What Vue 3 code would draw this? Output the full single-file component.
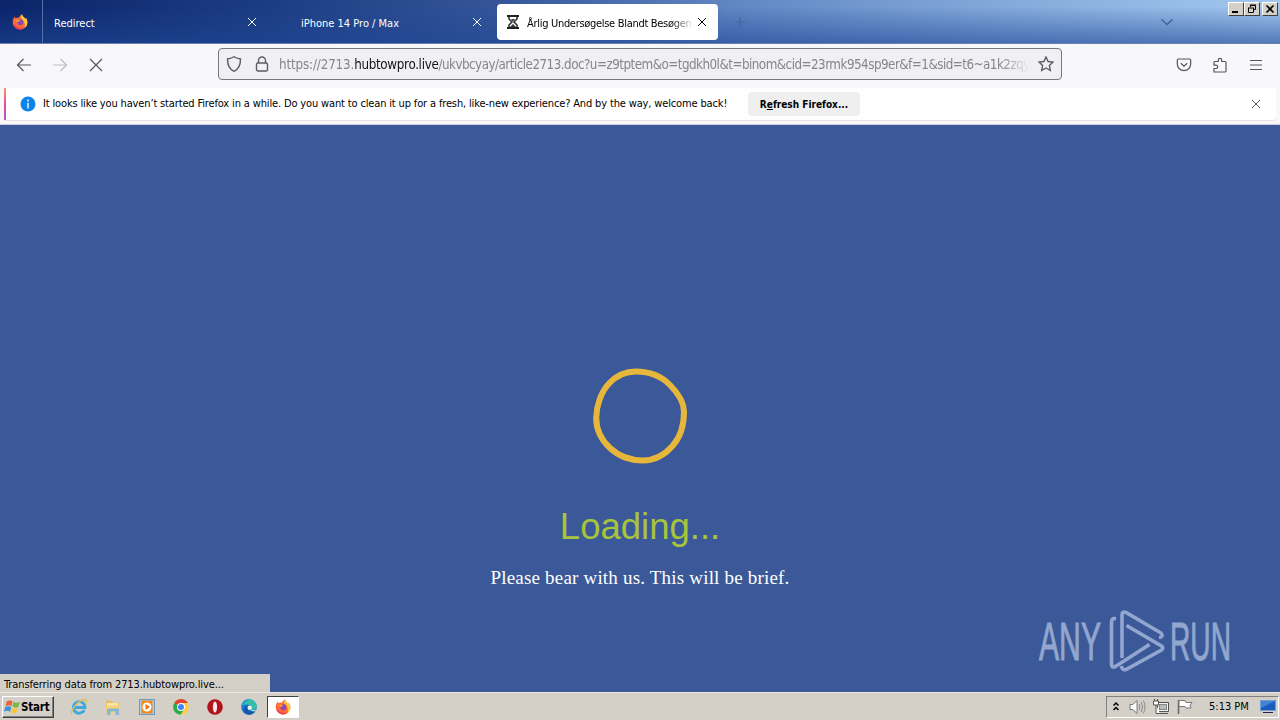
<template>
  <div class="desktop">
    <header class="tabstrip">
      <div class="fox-cell">
        <svg class="fox" viewBox="0 0 16 16"><use href="#firefox" /></svg>
      </div>
      <div v-for="tab in tabs" :key="tab.title" class="tab" :class="{ active: tab.active }">
        <svg v-if="tab.active" class="hourglass" viewBox="0 0 12 14">
          <path d="M0 1h12M0 13h12" stroke="#222" stroke-width="2" />
          <path d="M2 2v2l3 3-3 3v2M10 2v2L7 7l3 3v2" fill="none" stroke="#333" stroke-width="1.6" />
          <path d="M4 4h4L6 6.500zM3 12l3-3 3 3z" fill="#333" />
        </svg>
        <span class="tab-title">{{ tab.title }}</span>
        <svg class="close" viewBox="0 0 10 10"><path d="M1 1l8 8M9 1L1 9" /></svg>
      </div>
      <svg class="plus" viewBox="0 0 12 12"><path d="M6 1v10M1 6h10" /></svg>
      <svg class="all-tabs" viewBox="0 0 14 8"><path d="M1.500 1.500L7 6.500l5.500-5" /></svg>
      <div class="window-buttons">
        <span class="win-btn"><svg viewBox="0 0 14 12"><path d="M3 9h6" stroke-width="2" /></svg></span>
        <span class="win-btn"><svg viewBox="0 0 14 12"><path d="M5.500 4V2.500h5v4H9M5 2h6M3 5h6M3.500 5v4.500h5V5" /></svg></span>
        <span class="win-btn last"><svg viewBox="0 0 14 12"><path d="M3.500 2.500l7 7M10.500 2.500l-7 7" stroke-width="1.700" /></svg></span>
      </div>
    </header>

    <nav class="toolbar">
      <svg class="nav-icon back" viewBox="0 0 16 16"><path d="M15 8H1.500M7.500 2l-6 6 6 6" /></svg>
      <svg class="nav-icon forward" viewBox="0 0 16 16"><path d="M1 8h13.500M8.500 2l6 6-6 6" /></svg>
      <svg class="nav-icon stop" viewBox="0 0 16 16"><path d="M2 2l12 12M14 2L2 14" /></svg>
      <div class="urlbar">
        <svg class="shield" viewBox="0 0 16 16"><path d="M8 .8C6.500 2 4 2.600 1.500 3c0 6 1.200 10 6.500 12.300C13.300 13 14.500 9 14.500 3 12 2.600 9.500 2 8 .8z" /></svg>
        <svg class="lock" viewBox="0 0 14 16"><rect x="1.500" y="7" width="11" height="8" rx="1.500" /><path d="M3.500 7V4.500a3.500 3.500 0 0 1 7 0V7" /></svg>
        <div class="url"><span class="scheme">https://2713.</span><b>hubtowpro.live</b>/ukvbcyay/article2713.doc?u=z9tptem&amp;o=tgdkh0l&amp;t=binom&amp;cid=23rmk954sp9er&amp;f=1&amp;sid=t6~a1k2zqy</div>
        <svg class="star" viewBox="0 0 16 16"><path d="M8 1l2.100 4.500 4.900.6-3.600 3.400.9 5L8 12l-4.300 2.500.9-5L1 6.100l4.900-.6z" /></svg>
      </div>
      <svg class="nav-icon pocket" viewBox="0 0 16 16"><path d="M2.500 2h11a1.200 1.200 0 0 1 1.200 1.200V7a6.700 6.700 0 0 1-13.400 0V3.200A1.200 1.200 0 0 1 2.500 2zM4.800 6.200L8 9.200l3.200-3" /></svg>
      <svg class="nav-icon puzzle" viewBox="0 0 16 16"><path d="M2 15V11.500h2a1.700 1.700 0 0 0 0-3.400H2V5.500a1 1 0 0 1 1-1h3.300V3a1.700 1.700 0 0 1 3.400 0v1.500H13a1 1 0 0 1 1 1V14a1 1 0 0 1-1 1z" /></svg>
      <svg class="nav-icon menu" viewBox="0 0 16 16"><path d="M2 3.500h12M2 8h12M2 12.500h12" /></svg>
    </nav>

    <div class="notice-wrap">
      <div class="notice">
        <span class="accent"></span>
        <svg class="info" viewBox="0 0 16 16"><circle cx="8" cy="8" r="7.500" fill="#0a84e8" /><path d="M8 3.500v2M8 6.800V12.500" stroke="#fff" stroke-width="1.400" /></svg>
        <span class="notice-text">It looks like you haven’t started Firefox in a while. Do you want to clean it up for a fresh, like-new experience? And by the way, welcome back!</span>
        <button class="refresh">R<u>e</u>fresh Firefox...</button>
        <svg class="notice-close" viewBox="0 0 10 10"><path d="M1 1l8 8M9 1L1 9" /></svg>
      </div>
    </div>

    <main class="page">
      <svg class="ring" viewBox="0 0 100 100">
        <path d="M46 5.600C58 5.600 71 10 80 19C89 28 94 37 94 46C94 58 90.500 71 82.500 80C74.500 89 65 94.400 53 94.400C41 94.400 28.500 90 20 82C11.500 74 6.200 64 6.200 52C6.200 40 11 26 19 17.500C27 9 35 5.600 46 5.600z" />
      </svg>
      <h1 class="loading"><span>Loading...</span></h1>
      <p class="bear"><span>Please bear with us. This will be brief.</span></p>
      <svg class="watermark" viewBox="0 0 200 70">
        <text x="4" y="55" textLength="62" lengthAdjust="spacingAndGlyphs">ANY</text>
        <text x="135" y="55" textLength="61" lengthAdjust="spacingAndGlyphs">RUN</text>
        <path d="M81 13.500h-1.500q-3 0-3 4V59q0 4 4 2.500L114.500 39.500" />
        <path d="M87 53V10q0-4 4-2.500L126 28q3 4-2 4.500" />
        <path d="M91.500 20.500l35 20.500q2.500 2 0 4L91 64.500q-4 1-4.500-3.500" />
      </svg>
      <div class="status">Transferring data from 2713.hubtowpro.live...</div>
    </main>

    <footer class="taskbar">
      <button class="start">
        <svg viewBox="0 0 18 16">
          <path d="M3 2q3-2 6 0L8 7Q5 5.500 1.500 7z" fill="#ee6338" />
          <path d="M10 2.500q3 2 7 0L15 8q-3 1.500-6-.5z" fill="#75b843" />
          <path d="M1.300 8Q5 6.500 7.700 8L6.500 13Q3 11 0 13z" fill="#3c91da" />
          <path d="M8.700 8.500q3 2 6 .5L13 14q-3 1.500-5.600-.5z" fill="#f9c636" />
        </svg>
        <span>Start</span>
      </button>
      <div class="quick">
        <span class="quick-item">
          <svg viewBox="0 0 18 18">
            <path d="M14.300 12.200A5.800 5.800 0 1 1 15 9.500H5" fill="none" stroke="#3fa9df" stroke-width="2.800" />
            <path d="M2 16.500C-.5 13 8.500 2 15 1.500c2.200.2 1.700 2.500.5 4.500" fill="none" stroke="#e0bf55" stroke-width="1.300" />
          </svg>
        </span>
        <span class="quick-item">
          <svg viewBox="0 0 18 18">
            <path d="M2 2.500h5l1.500 2H15v9H2z" fill="#dfc069" />
            <path d="M3 5h11v8H3z" fill="#f8e7a0" />
            <path d="M2 7.500h14V15H2z" fill="#f0d27a" />
            <path d="M3.500 16.500v-5.500h11v5.500H12V13H6v3.500z" fill="#83bce5" stroke="#62a2d2" stroke-width=".5" />
          </svg>
        </span>
        <span class="quick-item">
          <svg viewBox="0 0 18 18">
            <rect x="1.500" y="1.500" width="15" height="15" fill="#a9cdea" stroke="#6b9cc5" />
            <rect x="3.500" y="2.500" width="11" height="13" fill="#f48b18" />
            <circle cx="9" cy="9" r="4.500" fill="#fff" />
            <path d="M7.500 6l4.500 3-4.500 3z" fill="#e87508" />
          </svg>
        </span>
        <span class="quick-item">
          <svg viewBox="0 0 18 18">
            <circle cx="9" cy="9" r="7.800" fill="#ffce43" />
            <path d="M9 9L2.200 5.100A7.800 7.800 0 0 1 15.800 5.100H9z" fill="#e34133" />
            <path d="M2.200 5.100A7.800 7.800 0 0 0 8.500 16.800L12.400 11 9 9z" fill="#2da94f" />
            <circle cx="9" cy="9" r="4" fill="#fff" />
            <circle cx="9" cy="9" r="3" fill="#4285f4" />
          </svg>
        </span>
        <span class="quick-item">
          <svg viewBox="0 0 18 18">
            <circle cx="9" cy="9" r="7.800" fill="#b3131b" />
            <ellipse cx="9" cy="9" rx="2.100" ry="5.600" fill="#f6e8e6" />
          </svg>
        </span>
        <span class="quick-item">
          <svg viewBox="0 0 18 18">
            <circle cx="9" cy="9" r="7.800" fill="#167bd0" />
            <path d="M1.300 8A7.800 7.800 0 0 1 16.800 8.500c0 3-3 3.500-5.500 3 1.500-3-1-5-4-5S2 7 1.300 8z" fill="#35c1a8" />
            <path d="M1.300 8A7.800 7.800 0 0 1 10 1.300C6 3 4 5 1.300 8z" fill="#1f8fdb" />
            <path d="M8 8c-2 3 1 7 7 5.500-3 4-8 4-10.500 1S4.500 8 8 8z" fill="#1558a8" />
            <path d="M11.300 11.500q5 1.500 6-1L15.500 13q-4 1-5-1.500z" fill="#d4d0c8" />
            <circle cx="9.800" cy="9.800" r="2.200" fill="#e4f1ef" />
          </svg>
        </span>
        <span class="quick-item pressed">
          <svg viewBox="0 0 16 16">
            <g id="firefox">
              <path d="M8 15.500A7.300 7.300 0 0 1 .7 8.200C.7 5.500 1.800 3.800 2.800 2.500l.6 1.800L5.500 3.600 6.600 4C7.500 2.200 9 1 10 .3c.3 2 2 2.800 3.500 4.700.3-.3.200-.8.200-1.200 1.200 1.200 1.700 3 1.700 4.600A7.300 7.300 0 0 1 8 15.500z" fill="#ff6a35" />
              <path d="M10 .3c.3 2 2 2.800 3.500 4.700.3-.3.200-.8.200-1.200 1.200 1.200 1.700 3 1.700 4.600 0 2-1 4.200-2.600 5.500C13.500 9 12 6 8.500 4z" fill="#ffc63a" />
              <path d="M1.500 11A7.300 7.300 0 0 0 12 14.500C8 14.500 4.500 13 3 10.500z" fill="#f3405a" />
              <circle cx="8.300" cy="8.300" r="3" fill="#8a48b8" />
              <path d="M3.200 6.500C5 5 7 5.500 8.500 6.500 7 7 6.500 8 5.200 8.200z" fill="#ff9a35" />
            </g>
          </svg>
        </span>
      </div>
      <div class="tray">
        <svg class="chevrons" viewBox="0 0 8 12"><path d="M1.500 4.500L4 2l2.500 2.500M1.500 9L4 6.500 6.500 9" /></svg>
        <svg class="tray-icon" viewBox="0 0 18 18">
          <path d="M2 6.500h3l4-4v13l-4-4H2z" fill="#fff" stroke="#777" />
          <path d="M11 6q2 3 0 6M13.200 4q3 5 0 10M15.300 2.500q3.500 6.500 0 13" fill="none" stroke="#888" />
        </svg>
        <svg class="tray-icon screen" viewBox="0 0 18 18">
          <path d="M5.500 4.500h11v9h-11zM8 15.500h8" fill="#f2f2f2" stroke="#555" />
          <rect x="7.500" y="6.500" width="7" height="5" fill="#bbb" stroke="#888" />
          <path d="M1.500 3v4h5V3zM2.500 3V1M5.500 3V1M4 7v8.500h4" fill="#fff" stroke="#555" />
        </svg>
        <svg class="tray-icon flag" viewBox="0 0 18 18">
          <path d="M2.500 2v14" stroke="#666" stroke-width="1.500" />
          <path d="M3 2.500h6l1 2h6l-2 3 1 2.500h-5l-1-1.500H3z" fill="#fff" stroke="#777" />
        </svg>
        <span class="clock">5:13 PM</span>
        <svg class="show-desktop" viewBox="0 0 16 14">
          <rect x=".5" y=".5" width="15" height="10" fill="#1a5dbd" stroke="#6f9fd4" />
          <path d="M1 1h14L1 8z" fill="#3f84d8" />
          <path d="M3 12.500h10" stroke="#224" />
        </svg>
      </div>
    </footer>
  </div>
</template>

<script setup>
import { ref } from 'vue'

const tabs = ref([
  { title: 'Redirect', active: false },
  { title: 'iPhone 14 Pro / Max', active: false },
  { title: 'Årlig Undersøgelse Blandt Besøgen', active: true }
])
</script>

<style>
body {
  margin: 0;
  overflow: hidden;
}
</style>

<style scoped>
.desktop {
  width: 1280px;
  height: 720px;
  display: flex;
  flex-direction: column;
  overflow: hidden;
  font-family: "DejaVu Sans Condensed", "DejaVu Sans", sans-serif;
  font-stretch: condensed;
  font-size: 11px;
  color: #000;
}

svg {
  display: block;
  flex: none;
}

/* tab strip */
.tabstrip {
  position: relative;
  box-sizing: border-box;
  height: 44px;
  flex: none;
  display: flex;
  align-items: center;
  background:
    linear-gradient(180deg, rgba(30, 70, 150, 0) 15%, rgba(30, 70, 150, 0.6) 100%),
    linear-gradient(90deg, #0b246a 0, #1c3d82 270px, #355598 500px, #6288c4 740px, #83a9da 1000px, #a2c7ef 1280px);
  border-bottom: 1px solid #6b80ae;
  color: #fff;
}

.fox-cell {
  box-sizing: border-box;
  width: 43px;
  height: 43px;
  padding: 14px 0 0 12px;
  border-right: 1px solid #5670a6;
}

.fox {
  width: 16px;
  height: 16px;
}

.tab {
  box-sizing: border-box;
  width: 221px;
  height: 36px;
  margin: 1px 2px 0;
  padding: 0 9px;
  display: flex;
  align-items: center;
  border-radius: 4px;
}

.tab + .tab {
  padding-left: 31px;
}

.tab.active {
  margin-left: 4px;
  padding: 0 11px 0 10px;
  background: #fff;
  color: #000;
}

.tab-title {
  flex: 1;
  padding-top: 2px;
  overflow: hidden;
  white-space: nowrap;
}

.active .tab-title {
  letter-spacing: -0.3px;
  mask-image: linear-gradient(90deg, #000 86%, transparent);
}

.hourglass {
  width: 12px;
  height: 14px;
  margin-right: 8px;
}

.close {
  width: 10px;
  height: 10px;
  margin-left: 4px;
  stroke: currentColor;
}

.active .close {
  margin-left: 3px;
}

.plus {
  width: 12px;
  height: 12px;
  margin-left: 14px;
  stroke: #456499;
  stroke-width: 1.2;
}

.all-tabs {
  width: 14px;
  height: 8px;
  margin-left: 414px;
  fill: none;
  stroke: #44638f;
  stroke-width: 1.5;
}

.window-buttons {
  position: absolute;
  top: 2px;
  right: 2px;
  display: flex;
}

.win-btn {
  box-sizing: border-box;
  width: 16px;
  height: 14px;
  background: #d4d0c8;
  border: 1px solid;
  border-color: #fff #404040 #404040 #fff;
}

.win-btn.last {
  margin-left: 2px;
}

.win-btn svg {
  width: 14px;
  height: 12px;
  fill: none;
  stroke: #000;
}

/* navigation */
.toolbar {
  height: 44px;
  flex: none;
  display: flex;
  align-items: center;
  background: #f8f8fb;
}

.nav-icon {
  width: 16px;
  height: 16px;
  margin-top: -2px;
  fill: none;
  stroke: #55555e;
  stroke-width: 1.2;
}

.back {
  margin-left: 16px;
}

.forward {
  margin-left: 20px;
  stroke: #bdbdc3;
}

.stop {
  margin-left: 20px;
}

.urlbar {
  box-sizing: border-box;
  width: 844px;
  height: 32px;
  margin: -4px 0 0 114px;
  padding: 0 7px;
  display: flex;
  align-items: center;
  background: #f0f0f4;
  border: 1px solid #77777c;
  border-radius: 4px;
}

.shield,
.lock,
.star {
  width: 16px;
  height: 16px;
  fill: none;
  stroke: #5b5b66;
  stroke-width: 1.4;
}

.lock {
  width: 14px;
  margin-left: 13px;
}

.url {
  flex: 1;
  margin: 0 8px 0 10px;
  overflow: hidden;
  white-space: nowrap;
  font-size: 13.3px;
  letter-spacing: -0.52px;
  color: #85858c;
  mask-image: linear-gradient(90deg, #000 96%, transparent);
}

.scheme {
  letter-spacing: -0.15px;
}

.url b {
  font-weight: normal;
  letter-spacing: -0.32px;
  color: #15141a;
}

.pocket {
  margin-left: 114px;
}

.puzzle {
  margin-left: 20px;
}

.menu {
  margin-left: 20px;
}

/* notification bar */
.notice-wrap {
  box-sizing: border-box;
  height: 37px;
  flex: none;
  padding: 0 4px;
  background: #f9f7f8;
  border-bottom: 1px solid #ccd0dc;
}

.notice {
  height: 32px;
  display: flex;
  align-items: center;
  background: #fff;
  border-bottom: 1px solid #ebe3e0;
  border-radius: 0 4px 4px 0;
}

.accent {
  width: 2px;
  height: 32px;
  background: linear-gradient(#f29c6b, #ec4c94 50%, #a35bd0);
}

.info {
  width: 16px;
  height: 16px;
  margin-left: 14px;
}

.notice-text {
  width: 684px;
  margin-left: 7px;
  padding-bottom: 2px;
  letter-spacing: -0.147px;
  white-space: nowrap;
}

.refresh {
  width: 112px;
  height: 24px;
  margin-left: 21px;
  padding: 0;
  border: 0;
  border-radius: 4px;
  background: #efeff0;
  color: #000;
  font: bold 10px "DejaVu Sans Condensed", "DejaVu Sans", sans-serif;
}

.notice-close {
  width: 10px;
  height: 10px;
  margin: 0 15px 0 auto;
  stroke: #5b5b66;
}

/* page */
.page {
  position: relative;
  height: 567px;
  flex: none;
  background: #3b5998;
  text-align: center;
}

.ring {
  width: 100px;
  height: 100px;
  margin: 0 auto;
  padding-top: 241px;
  fill: none;
  stroke: #e7b73b;
  stroke-width: 6;
}

.loading {
  margin: 40px 0 0;
  font: 36.5px/42px "Liberation Sans", Arial, sans-serif;
  color: #a7c43c;
}

.bear {
  margin: 18px 0 0;
  font: 19px/24px "Palatino Linotype", "Liberation Serif", serif;
  letter-spacing: 0.19px;
  color: #fff;
}

.watermark {
  position: absolute;
  left: 1035px;
  top: 480px;
  width: 200px;
  height: 70px;
  fill: none;
  stroke: #92a6cf;
  stroke-width: 3.6;
}

.watermark text {
  font: 53px "Liberation Sans Narrow", "Liberation Sans", sans-serif;
  fill: #92a6cf;
  stroke-width: 1;
}

.status {
  position: absolute;
  left: 0;
  bottom: 0;
  box-sizing: border-box;
  width: 270px;
  height: 18px;
  padding-left: 4px;
  background: #d4d0c8;
  line-height: 21px;
  letter-spacing: -0.11px;
  text-align: left;
}

/* taskbar */
.taskbar {
  box-sizing: border-box;
  height: 28px;
  flex: none;
  display: flex;
  align-items: center;
  background: #d4d0c8;
  border-top: 1px solid #e8e6e2;
}

.start {
  box-sizing: border-box;
  width: 52px;
  height: 22px;
  margin-left: 2px;
  padding: 0 1px;
  display: flex;
  align-items: center;
  background: #d4d0c8;
  border: 1px solid;
  border-color: #fff #404040 #404040 #fff;
  box-shadow: inset -1px -1px #808080;
  font: bold 11.5px "DejaVu Sans Condensed", "DejaVu Sans", sans-serif;
  letter-spacing: -0.2px;
  color: #000;
}

.start svg {
  width: 17px;
  height: 16px;
}

.quick {
  margin-left: 9px;
  display: flex;
  align-items: center;
  gap: 2px;
}

.quick-item {
  box-sizing: border-box;
  width: 32px;
  height: 22px;
  display: flex;
  align-items: center;
  justify-content: center;
}

.quick-item svg {
  width: 18px;
  height: 18px;
}

.pressed {
  background: #fff;
  border: 1px solid;
  border-color: #404040 #fff #fff #404040;
}

.quick-item.pressed svg {
  width: 16px;
  height: 16px;
}

.tray {
  box-sizing: border-box;
  width: 173px;
  height: 22px;
  margin: 0 1px 0 auto;
  padding-left: 5px;
  display: flex;
  align-items: center;
  border: 1px solid;
  border-color: #808080 #fff #fff #808080;
}

.chevrons {
  width: 8px;
  height: 12px;
  fill: none;
  stroke: #000;
  stroke-width: 1.5;
}

.tray-icon {
  width: 18px;
  height: 18px;
  margin-left: 8px;
}

.screen {
  margin-left: 6px;
}

.flag {
  margin-left: 6px;
}

.clock {
  width: 40px;
  margin-left: 15px;
  white-space: nowrap;
}

.show-desktop {
  width: 16px;
  height: 14px;
  margin-left: 11px;
}
</style>
